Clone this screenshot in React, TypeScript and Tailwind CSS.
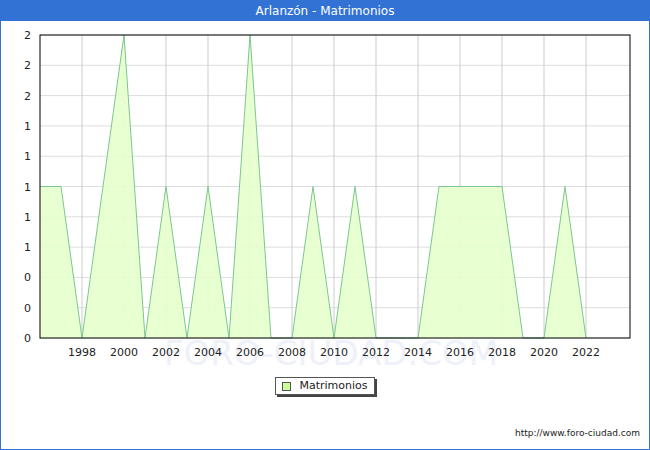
export default function App() {
  const x0 = 39, dx = 21, y0 = 337, yTop = 34;
  const yv = (v: number) => y0 - (v / 2) * (y0 - yTop);
  const data: [number, number][] = [
    [1996, 1], [1997, 1], [1998, 0], [1999, 1], [2000, 2], [2001, 0], [2002, 1], [2003, 0], [2004, 1], [2005, 0],
    [2006, 2], [2007, 0], [2008, 0], [2009, 1], [2010, 0], [2011, 1], [2012, 0], [2013, 0], [2014, 0], [2015, 1],
    [2016, 1], [2017, 1], [2018, 1], [2019, 0], [2020, 0], [2021, 1], [2022, 0],
  ];
  const pts = data.map(([yr, v]) => `${x0 + (yr - 1996) * dx},${yv(v)}`).join(" ");
  const area = `${x0},${y0} ${pts} ${x0 + 26 * dx},${y0}`;
  const years = [1998, 2000, 2002, 2004, 2006, 2008, 2010, 2012, 2014, 2016, 2018, 2020, 2022];
  const ylabels = ["0", "0", "0", "1", "1", "1", "1", "1", "2", "2", "2"];
  return (
    <div className="w-[650px] h-[450px] border border-[#3272d4] bg-white flex flex-col" style={{ fontFamily: '"DejaVu Sans", sans-serif' }}>
      <div className="h-[20px] bg-[#3272d4] text-white text-[12px] flex items-center justify-center shrink-0">Arlanzón - Matrimonios</div>
      <svg width="648" height="345" viewBox="0 20 648 345" className="shrink-0">
        <text x="330" y="364" textAnchor="middle" fontSize="34" fill="#eef0fa" fontFamily="DejaVu Sans">FORO-CIUDAD.COM</text>
        {ylabels.map((_, i) => (
          <line key={i} x1={x0} x2={629} y1={y0 - i * (y0 - yTop) / 10} y2={y0 - i * (y0 - yTop) / 10} stroke="#dddddd" />
        ))}
        {years.map((yr) => (
          <line key={yr} x1={x0 + (yr - 1996) * dx} x2={x0 + (yr - 1996) * dx} y1={yTop} y2={y0} stroke="#cccccc" />
        ))}
        <polygon points={area} fill="#e5ffcc" fillOpacity="0.9" />
        <polyline points={pts} fill="none" stroke="#7cc68f" strokeWidth="1" />
        <rect x={x0} y={yTop} width={629 - x0} height={y0 - yTop} fill="none" stroke="#000" />
        {ylabels.map((l, i) => (
          <text key={i} x="30" y={y0 - i * (y0 - yTop) / 10 + 4} textAnchor="end" fontSize="11" fill="#222">{l}</text>
        ))}
        {years.map((yr) => (
          <text key={yr} x={x0 + (yr - 1996) * dx} y="355" textAnchor="middle" fontSize="11" fill="#222">{yr}</text>
        ))}
      </svg>
      <div className="flex justify-center mt-[11px]">
        <div className="flex items-center gap-[8px] border border-[#555] bg-white px-[6px] h-[18px] text-[11px] text-[#222] shadow-[2px_2px_0_#444]">
          <span className="w-[9px] h-[9px] border border-[#555] bg-[#ccff99]" />
          <span>Matrimonios</span>
        </div>
      </div>
      <div className="flex-1" />
      <div className="text-[9px] text-[#222] text-right pr-[9px] pb-[9px]">http://www.foro-ciudad.com</div>
    </div>
  );
}
